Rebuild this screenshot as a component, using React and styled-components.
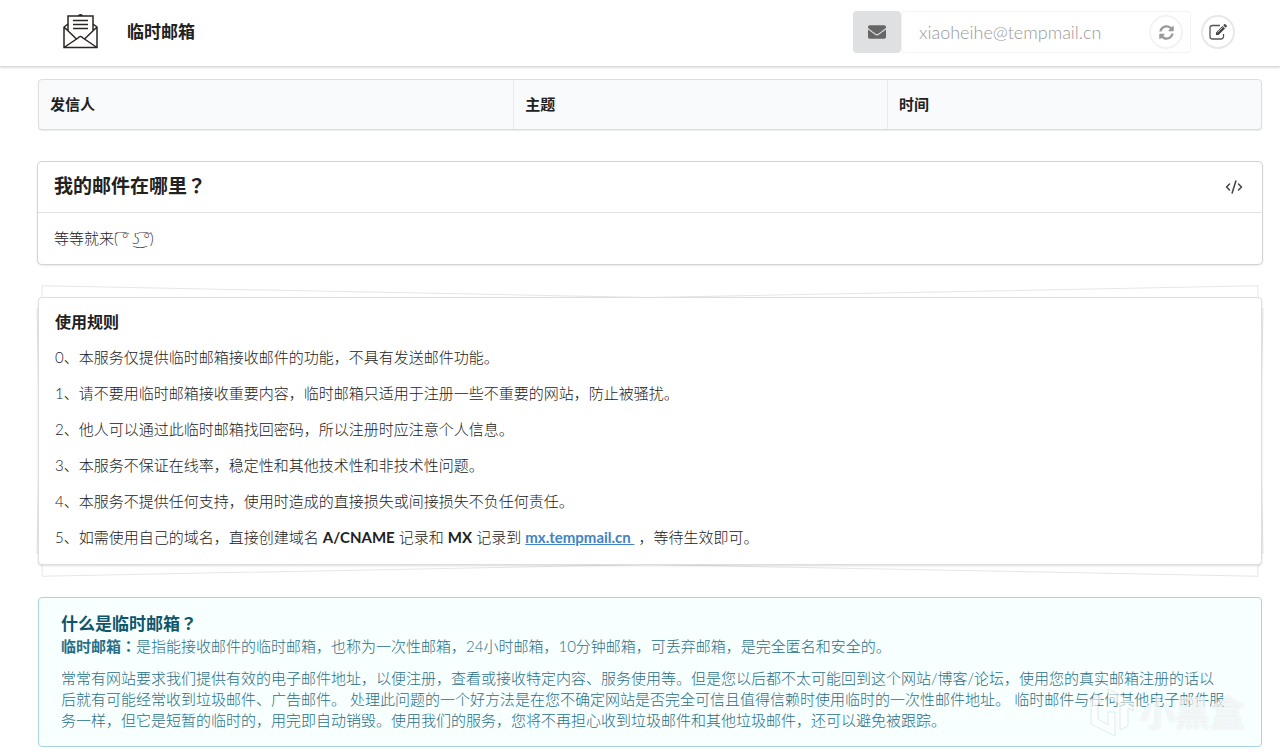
import styled, { createGlobalStyle } from "styled-components";
import { FaEnvelope, FaSyncAlt } from "react-icons/fa";
import { CodeXml } from "lucide-react";

const GlobalStyle = createGlobalStyle`
  * {
    box-sizing: border-box;
  }
  body {
    margin: 0;
    background: #fff;
    color: #212121;
    font-family: Lato, "Noto Sans CJK SC", sans-serif;
    font-size: 15px;
    line-height: 21px;
  }
`;

const Header = styled.header`
  display: flex;
  align-items: center;
  height: 67px;
  padding: 0 45px 2px 62px;
  border-bottom: 1px solid #d9dadb;
  box-shadow: 0 1px 2px rgba(34, 36, 38, 0.15);
`;

const Brand = styled.h1`
  flex: 1;
  margin: 0 0 0 28px;
  font-size: 17px;
  font-weight: 700;
  line-height: 24px;
`;

const Address = styled.div`
  display: flex;
  height: 42px;
  margin-right: 10px;
`;

const AddressLabel = styled.label`
  display: flex;
  align-items: center;
  justify-content: center;
  width: 48px;
  border-radius: 4px;
  background: #dfe0e1;
  color: #666;
  font-size: 18px;
`;

const AddressBox = styled.div`
  display: flex;
  align-items: center;
  width: 290px;
  padding-right: 7px;
  border: 1px solid #f3f3f4;
  border-radius: 4px;
`;

const AddressInput = styled.input`
  flex: 1;
  min-width: 0;
  padding: 0 0 0 17px;
  border: 0;
  outline: 0;
  background: transparent;
  color: #999;
  font-family: inherit;
  font-size: 18px;
  font-weight: 300;
`;

const RoundButton = styled.button`
  display: flex;
  align-items: center;
  justify-content: center;
  width: 34px;
  height: 34px;
  padding: 0;
  border: 2px solid ${(props) => (props.$faded ? "#f3f3f3" : "#e8e8e8")};
  border-radius: 50%;
  background: #fff;
  color: ${(props) => (props.$faded ? "#999" : "#555")};
  font-size: 15px;
`;

const Main = styled.main`
  padding: 12px 18px 8px 38px;
`;

const MailTable = styled.table`
  width: 100%;
  border: 1px solid #dededf;
  border-radius: 4px;
  border-spacing: 0;
  background: #f9fafb;
  box-shadow: 0 1px 1px rgba(34, 36, 38, 0.1);
  table-layout: fixed;
`;

const HeadCell = styled.th`
  width: ${(props) => props.$width};
  height: 49px;
  padding: 0 11px;
  border-left: ${(props) => (props.$first ? "0" : "1px solid #e8e9e9")};
  font-weight: 700;
  text-align: left;
`;

const Card = styled.section`
  margin-top: 32px;
  border-radius: 4px;
  box-shadow: 0 0 0 1px #d4d4d5, 0 1px 3px 0 #d4d4d5;
`;

const CardHead = styled.div`
  display: flex;
  align-items: center;
  justify-content: space-between;
  height: 51px;
  padding: 0 19px 2px 16px;
  border-bottom: 1px solid #e4e4e5;
`;

const CardTitle = styled.h2`
  margin: 0;
  font-size: 19px;
  font-weight: 700;
  line-height: 24px;
`;

const CodeButton = styled.button`
  display: flex;
  padding: 2px 0 0;
  border: 0;
  background: none;
  color: #444;
`;

const CardBody = styled.p`
  margin: 0;
  padding: 15px 16px;
  font-weight: 300;
`;

const Pile = styled.section`
  position: relative;
  z-index: 0;
  margin-top: 33px;

  &::before,
  &::after {
    content: "";
    position: absolute;
    inset: 0 1px;
    z-index: -1;
    border: 1px solid #e6e6e7;
    background: #fff;
    transform: rotate(-1.1deg);
  }
  &::after {
    transform: rotate(1.1deg);
  }
`;

const Sheet = styled.div`
  padding: 13px 16px 16px;
  border: 1px solid #dededf;
  border-radius: 4px;
  background: #fff;
  box-shadow: 0 1px 2px rgba(34, 36, 38, 0.15);
`;

const SheetTitle = styled.h3`
  margin: 0 0 15px;
  font-size: 16px;
  font-weight: 700;
  line-height: 21px;
`;

const Rule = styled.p`
  margin: 0 0 15px;
  font-weight: 300;
  &:last-child {
    margin: 0;
  }
`;

const Strong = styled.strong`
  font-weight: 700;
`;

const MxLink = styled.a`
  color: #4183c4;
  font-weight: 700;
  text-decoration: underline;
`;

const Info = styled.section`
  position: relative;
  margin-top: 32px;
  padding: 14px 34px 15px 22px;
  border: 1px solid #a9d5de;
  border-radius: 4px;
  background: #f8ffff;
  color: #276f86;
  font-weight: 300;
`;

const InfoTitle = styled.h3`
  margin: 0;
  color: #0e566c;
  font-size: 17px;
  font-weight: 700;
  line-height: 24px;
`;

const InfoText = styled.p`
  margin: 0;
  & + & {
    margin-top: 11px;
  }
`;

const WideMark = styled.span`
  font-family: "Noto Sans CJK TC", sans-serif;
  line-height: 1;
`;

const Watermark = styled.div`
  position: absolute;
  right: 16px;
  bottom: 8px;
  display: flex;
  align-items: center;
  gap: 6px;
  color: rgba(255, 255, 255, 0.7);
  font-size: 35px;
  font-weight: 700;
  line-height: 52px;
  text-shadow: 0 0 2px rgba(90, 110, 115, 0.2);
  pointer-events: none;
`;

const rules = [
  "本服务仅提供临时邮箱接收邮件的功能，不具有发送邮件功能。",
  "请不要用临时邮箱接收重要内容，临时邮箱只适用于注册一些不重要的网站，防止被骚扰。",
  "他人可以通过此临时邮箱找回密码，所以注册时应注意个人信息。",
  "本服务不保证在线率，稳定性和其他技术性和非技术性问题。",
  "本服务不提供任何支持，使用时造成的直接损失或间接损失不负任何责任。",
];

const Logo = () => (
  <svg width="37" height="36" viewBox="0 0 37 36" fill="none" stroke="#2b2523" strokeWidth="1.5">
    <path d="M6 10L2 13v20.500h33V13l-4-3M6 17V2h25v15M2 13l13 12.500M35 13L22 25.500M2 33.500l14-9.500q2.500-3 5 0l14 9.500M11 6.500h15M11 10.500h15M11 14.500h15" />
    <path d="M16 2a2.500 2 0 0 1 5 0z" fill="#2b2523" stroke="none" />
  </svg>
);

const EditIcon = () => (
  <svg width="20" height="18" viewBox="0 0 20 18">
    <path
      d="M12 2.500H4.500A2.500 2.500 0 0 0 2 5v8.500A2.500 2.500 0 0 0 4.500 16H13a2.500 2.500 0 0 0 2.500-2.500V11"
      fill="none"
      stroke="#555"
      strokeWidth="1.300"
    />
    <path d="M8 9.500L14.500 3l2.500 2.500L10.500 12H8zM15.200 2.300l1-1q.6-.5 1.200 0L18.700 2.600q.5.600 0 1.200l-1 1z" fill="#444" />
    <path d="M9.500 9.500l5-5" stroke="#fff" strokeWidth=".7" />
  </svg>
);

const BoxLogo = () => (
  <svg width="44" height="50" viewBox="0 0 44 50" fill="#fff" fillOpacity=".6" stroke="#a8b8bb" strokeOpacity=".3">
    <path d="M1 13l10-6v8l-3 2v15l10 6V25h7v24L1 37zM18 2l25 13v9l-5-3v18l-8 4V17L18 11z" />
  </svg>
);

const App = () => {
  return (
    <>
      <GlobalStyle />
      <Header>
        <Logo />
        <Brand>临时邮箱</Brand>
        <Address>
          <AddressLabel htmlFor="address" aria-label="邮箱">
            <FaEnvelope />
          </AddressLabel>
          <AddressBox>
            <AddressInput id="address" defaultValue="xiaoheihe@tempmail.cn" readOnly />
            <RoundButton $faded aria-label="刷新">
              <FaSyncAlt />
            </RoundButton>
          </AddressBox>
        </Address>
        <RoundButton aria-label="编辑">
          <EditIcon />
        </RoundButton>
      </Header>
      <Main>
        <MailTable>
          <thead>
            <tr>
              <HeadCell $first $width="38.8%">发信人</HeadCell>
              <HeadCell $width="30.6%">主题</HeadCell>
              <HeadCell $width="30.6%">时间</HeadCell>
            </tr>
          </thead>
        </MailTable>

        <Card>
          <CardHead>
            <CardTitle>
              我的邮件在哪里<WideMark>？</WideMark>
            </CardTitle>
            <CodeButton aria-label="代码">
              <CodeXml size={18} strokeWidth={2} />
            </CodeButton>
          </CardHead>
          <CardBody>等等就来( ͡° ͜ʖ ͡°)</CardBody>
        </Card>

        <Pile>
          <Sheet>
            <SheetTitle>使用规则</SheetTitle>
            {rules.map((rule, i) => (
              <Rule key={rule}>
                {i}、{rule}
              </Rule>
            ))}
            <Rule>
              5、如需使用自己的域名，直接创建域名 <Strong>A/CNAME</Strong> 记录和 <Strong>MX</Strong>{" "}
              记录到 <MxLink href="#mx">mx.tempmail.cn&nbsp;</MxLink> ，等待生效即可。
            </Rule>
          </Sheet>
        </Pile>

        <Info>
          <InfoTitle>
            什么是临时邮箱<WideMark>？</WideMark>
          </InfoTitle>
          <InfoText>
            <Strong>
              临时邮箱<WideMark>：</WideMark>
            </Strong>
            是指能接收邮件的临时邮箱，也称为一次性邮箱，24小时邮箱，10分钟邮箱，可丢弃邮箱，是完全匿名和安全的。
          </InfoText>
          <InfoText>
            常常有网站要求我们提供有效的电子邮件地址，以便注册，查看或接收特定内容、服务使用等。但是您以后都不太可能回到这个网站/博客/论坛，使用您的真实邮箱注册的话以后就有可能经常收到垃圾邮件、广告邮件。
            处理此问题的一个好方法是在您不确定网站是否完全可信且值得信赖时使用临时的一次性邮件地址。
            临时邮件与任何其他电子邮件服务一样，但它是短暂的临时的，用完即自动销毁。使用我们的服务，您将不再担心收到垃圾邮件和其他垃圾邮件，还可以避免被跟踪。
          </InfoText>
          <Watermark>
            <BoxLogo />
            小黑盒
          </Watermark>
        </Info>
      </Main>
    </>
  );
};

export default App;
